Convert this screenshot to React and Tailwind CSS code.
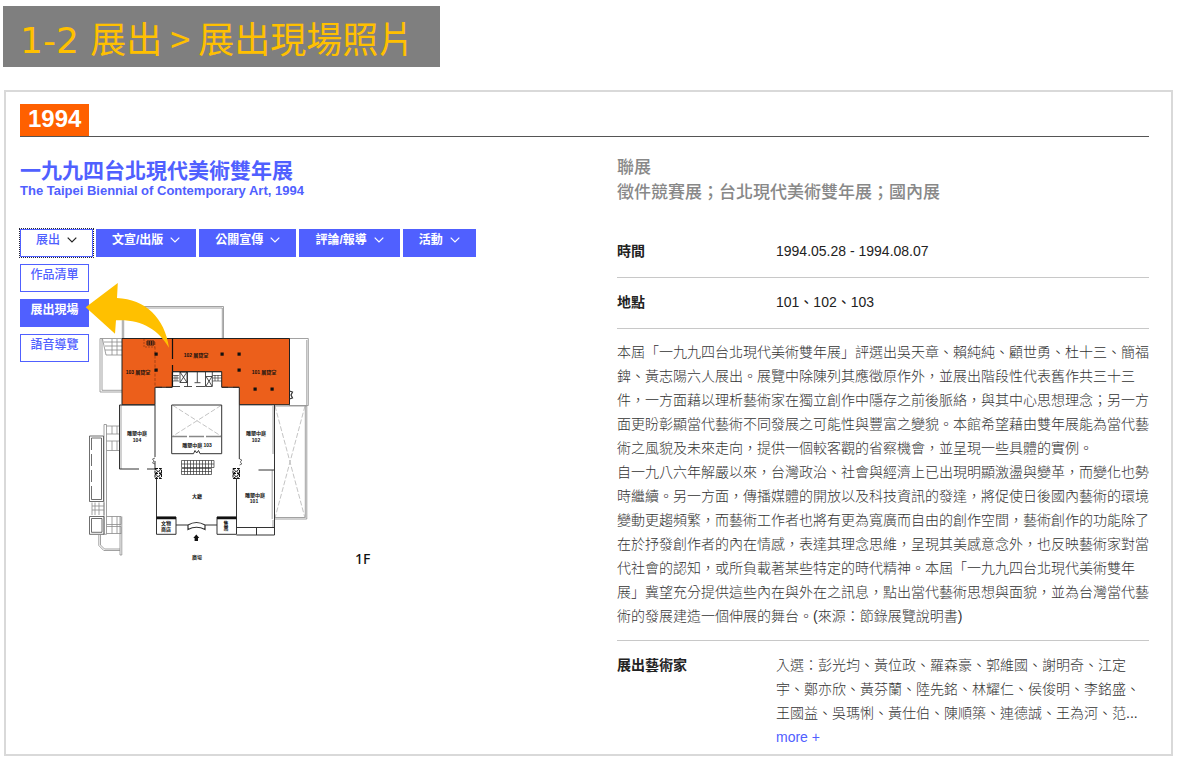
import clsx from "clsx";

const tabs = [
  { label: "展出", active: true },
  { label: "文宣/出版" },
  { label: "公關宣傳" },
  { label: "評論/報導" },
  { label: "活動" },
];

const subItems = [
  { label: "作品清單" },
  { label: "展出現場", active: true },
  { label: "語音導覽" },
];

const paragraphs = [
  "本屆「一九九四台北現代美術雙年展」評選出吳天章、賴純純、顧世勇、杜十三、簡福錍、黃志陽六人展出。展覽中除陳列其應徵原作外，並展出階段性代表舊作共三十三件，一方面藉以理析藝術家在獨立創作中隱存之前後脈絡，與其中心思想理念；另一方面更盼彰顯當代藝術不同發展之可能性與豐富之變貌。本館希望藉由雙年展能為當代藝術之風貌及未來走向，提供一個較客觀的省察機會，並呈現一些具體的實例。",
  "自一九八六年解嚴以來，台灣政治、社會與經濟上已出現明顯激盪與變革，而變化也勢時繼續。另一方面，傳播媒體的開放以及科技資訊的發達，將促使日後國內藝術的環境變動更趨頻繁，而藝術工作者也將有更為寬廣而自由的創作空間，藝術創作的功能除了在於抒發創作者的內在情感，表達其理念思維，呈現其美感意念外，也反映藝術家對當代社會的認知，或所負載著某些特定的時代精神。本屆「一九九四台北現代美術雙年展」冀望充分提供這些內在與外在之訊息，點出當代藝術思想與面貌，並為台灣當代藝術的發展建造一個伸展的舞台。(來源：節錄展覽說明書)",
];

const artists =
  "入選：彭光均、黃位政、羅森豪、郭維國、謝明奇、江定宇、鄭亦欣、黃芬蘭、陸先銘、林耀仁、侯俊明、李銘盛、王國益、吳瑪悧、黃仕伯、陳順築、連德誠、王為河、范...";

const pillars = [
  [156, 354],
  [156, 370],
  [222, 354],
  [239, 354],
  [239, 370],
  [255, 389],
  [272, 389],
];

const roomLabels = [
  [196, 357, "102 展覽室"],
  [138, 374, "103 展覽室"],
  [264, 374, "101 展覽室"],
  [137, 435, "雕塑中庭"],
  [137, 442, "104"],
  [256, 435, "雕塑中庭"],
  [256, 442, "102"],
  [255, 497, "雕塑中庭"],
  [254, 503, "101"],
  [197, 447, "雕塑中庭 103"],
  [197, 498, "大廳"],
  [166, 525, "文物"],
  [166, 531, "商店"],
  [226, 525, "售"],
  [226, 530, "票"],
  [197, 559, "廣場"],
];

function Chevron() {
  return (
    <svg width="10" height="6" viewBox="0 0 10 6" fill="none" stroke="currentColor" aria-hidden="true">
      <path d="M.7.7 5 5 9.3.7" strokeWidth="1.2" />
    </svg>
  );
}

function FloorPlan() {
  return (
    <svg viewBox="89 264 291 311" className="h-[311px] w-[291px]" role="img" aria-label="1F">
      {/* terraces and outer walls */}
      <g fill="none" stroke="#8a8a8a" strokeWidth=".8">
        <path d="M122.3 338V306.5H223.5V338M123.7 338V308H222.3V338" />
        <path d="M122 338.5H100V392H122M102 338.5V390.3H122M102.500 339 106 355H122M104 342H122M105 346H122M105 350H122M112 339V355M117 339V355" />
        <path d="M289 338.5H308.300V405.500H289M306.800 340V405" />
        <path d="M275 406H306.800V519H275M305.300 406V517.500H275" />
        <path d="M273 406V454M272.200 470V519M273 520V527" />
        <path d="M121 405V469M119.500 405V469" />
        <path d="M104 424.500V534.300H106.500V424.500ZM106.500 426H119.500M106.500 434H119.500M106.500 441H119.500M106.500 450.500H119.500M112 426V434M117 426V434M112 441V450.500M117 441V450.500" />
        <path d="M106.500 516.500H121V524.500H106.500M106.500 526.500H121V534M106.500 533.500H121M112 516.500V533.500M117 516.500V533.500M120 516.500V555H121.800V516.500" />
        <path d="M92 502.500V515M95 502.500V515M99 502.500V515M104 502.500V515M92 506H104M92 510H104" />
        <path d="M98.800 535V545.500L103.800 550.500H120M100.500 535V545L104.500 549H120" />
      </g>
      <g fill="none" stroke="#aaa" strokeWidth=".7" strokeDasharray="5 2">
        <path d="M275 406 305 518M305 406 275 518" />
        <path d="M173 405.500 221 436M221 405.500 173 436" />
      </g>
      <g fill="none" stroke="#4a4a4a">
        <path d="M89.500 436H103.500V501.500H89.500ZM91.500 438H101.500V499.500H91.500M91.500 438V450M91.500 454V466M91.500 470V482M91.500 486V499.500" strokeWidth=".8" />
        <path d="M89.500 516.500H104V534.300H89.500ZM91.500 518.500H102V532.300H91.500Z" strokeWidth=".8" />
      </g>

      {/* exhibition rooms */}
      <path
        d="M122 338.500H289.500V404.700H239.300V387.300H221.700V371.700H172.300V387.300H155V404.700H122Z"
        fill="#ec5f1b"
        stroke="#222"
        strokeWidth="1"
      />
      <g fill="none" stroke="#111">
        <path d="M172.500 338V359M172.500 365V387" strokeWidth="1.200" />
        <path d="M155 342V387" stroke="#7d3410" strokeWidth=".6" strokeDasharray="3 1.500" />
        <path d="M144 339V347H155" stroke="#7d3410" strokeWidth=".6" strokeDasharray="2 1" />
        <path d="M147 341H154V345H147ZM149.300 341V345M151.600 341V345M147 343H154" strokeWidth=".8" />
      </g>
      {pillars.map(([x, y]) => (
        <rect key={`${x}-${y}`} x={x - 1.5} y={y - 1.5} width="3.2" height="3.2" fill="#111" />
      ))}

      {/* service core */}
      <g fill="none" stroke="#222" strokeWidth=".8">
        <path d="M172.300 371.700H221.700M180 372H187V382.500H180ZM180 372 187 382.500M187 372 180 382.500M187.500 372V386.500M197.300 372V382.500M194.500 382.700H200.500M205.500 372V386.500H212.300V372M206 376.500H212M206 376.500 212 386M212 376.500 206 386" />
        <path d="M172.300 375.500H179M172.300 378H179M172.300 381H179M175 375V381M177 375V381M212.500 375.500H221.700M212.500 378H221.700M212.500 381H221.700M215 375V381M218 375V381" strokeWidth=".6" />
        <path d="M172.300 386.500H180M184 386.500H192M196 386.500H205M156 387.300H162M166 387.300H172M222 387.300H228M233 387.300H239" />
      </g>

      {/* halls and courtyards */}
      <g fill="none" stroke="#333" strokeWidth="1">
        <path d="M155 404.700V457M155 461V469H147M139 469H119.500V405H155" />
        <path d="M171.700 405H221.700V453.700H200L198.500 450.500 196.700 453 195 450.500 193.500 453.700H171.700Z" />
        <path d="M172 436.500H221.500" stroke="#888" strokeWidth="1.500" strokeDasharray="15 2" />
        <path d="M239.300 404.700V459M239.300 404.700H274.500V535H236.500M258.500 470H274.500M236.500 527.500H274.500M256.500 527.500V535M236.500 478V517M156.500 478V517" />
        <path d="M155 458 152.500 459 154 461 152.500 463 155 464M239.500 459 241.800 460 240.300 462 241.800 464 239.500 465" strokeWidth=".7" />
        <path d="M289.500 391 292.500 392 291 395 292.500 398 289.500 399" strokeWidth="1.200" />
        <path d="M176 525H188M205 525H217M188 525Q196.500 520 205 525V529.500Q196.500 525 188 529.500Z" strokeWidth="1.200" />
        <path d="M156.500 517H176V534.300H156.500ZM217 517H236.500V534.300H217Z" />
      </g>
      <g fill="none" stroke="#111">
        <path d="M156.500 518H176M217 518H236.500" strokeWidth="2.500" />
        <path d="M155 468.500H161.500V478.500H155ZM155 473.500H161.500M155 469 161.500 473.500M161.500 469 155 473.500M155 474 161.500 478.500M161.500 474 155 478.500" strokeDasharray="3 1" />
        <path d="M233 468.500H239.500V478.500H233ZM233 473.500H239.500M233 469 239.500 473.500M239.500 469 233 473.500M233 474 239.500 478.500M239.500 474 233 478.500" strokeDasharray="3 1" />
      </g>
      <g fill="none" stroke="#333" strokeWidth=".7">
        <path d="M181.500 460.500H214V467.500H181.500ZM181.500 464H214M181.500 468.500H211.500V474.500H181.500ZM181.500 471.500H211.500" />
        <path d="M184.500 460.500V474.500M187.500 460.500V474.500M190.500 460.500V474.500M193.500 460.500V474.500M196.500 460.500V474.500M199.500 460.500V474.500M202.500 460.500V474.500M205.500 460.500V474.500M208.500 460.500V474.500M211.500 460.500V467.500" />
      </g>
      <path d="M196.300 534.500 199.300 538H198V541H194.600V538H193.300Z" fill="#111" />

      <g fill="#111" textAnchor="middle" className="text-[5px] font-bold">
        {roomLabels.map(([x, y, text]) => (
          <text key={`${x}-${y}`} x={x} y={y}>
            {text}
          </text>
        ))}
      </g>
      <text x="355" y="564" fill="#111" className="font-['Noto_Sans'] text-[14px] font-medium">
        1F
      </text>
    </svg>
  );
}

function Pointer() {
  return (
    <svg
      viewBox="85 282 86 68"
      className="absolute top-[18px] left-[65px] h-[68px] w-[86px]"
      fill="#ffc000"
      aria-hidden="true"
    >
      <path d="M85.700 307.300 117.800 283 117 298C145 299 165 318 169 347.700C158 329 141 319 116 320.300L115 333.700Z" />
    </svg>
  );
}

function InfoRow({ label, children }) {
  return (
    <div className="flex border-b border-[#c8c8c8] pt-3 pb-[14px] text-sm leading-6">
      <dt className="w-[159px] shrink-0 font-bold text-[#222]">{label}</dt>
      <dd className="text-[#222]">{children}</dd>
    </div>
  );
}

export default function App() {
  return (
    <main className="bg-white font-['Liberation_Sans','Noto_Sans_CJK_TC',sans-serif]" lang="zh-Hant">
      <div className="px-[3px] pt-[6px]">
        <h1 className="h-[61px] w-[437px] bg-[#7f7f7f] pl-[17px] font-['DejaVu_Sans','Noto_Sans_CJK_TC',sans-serif] text-[36px] leading-[62px] whitespace-nowrap text-[#ffc000]">
          1-2 展出<span className="font-['Noto_Sans_CJK_TC']"> &gt; </span>展出現場照片
        </h1>
      </div>

      <section className="mx-1 mt-[23px] border-2 border-[#d9d9d9] pt-3 pr-[22px] pb-[5px] pl-[14px]">
        <div className="flex border-b border-[#555]">
          <span className="bg-[#ff6000] px-2 pb-0.5 text-2xl leading-[30px] font-bold text-white">1994</span>
        </div>

        <div className="grid grid-cols-[1fr_532px]">
          <div className="pt-[23px]">
            <h2 className="text-[21px] leading-[22px] font-bold text-[#5060ff]">一九九四台北現代美術雙年展</h2>
            <p className="text-[13px] leading-[18px] font-bold text-[#5060ff]">
              The Taipei Biennial of Contemporary Art, 1994
            </p>

            <nav className="mt-[29px] flex gap-[3px]">
              {tabs.map((tab) => (
                <button
                  key={tab.label}
                  type="button"
                  className={clsx(
                    "flex h-7 items-center gap-[7px] px-4 pb-1.5 text-xs",
                    tab.active
                      ? "bg-white font-medium text-[#5060ff] outline-1 outline-[#223] outline-dotted ring-1 ring-[#5060ff] ring-inset"
                      : "bg-[#5060ff] font-bold text-white"
                  )}
                >
                  {tab.label}
                  <span className={tab.active ? "text-[#222]" : "text-white"}>
                    <Chevron />
                  </span>
                </button>
              ))}
            </nav>

            <div className="relative mt-[7px] flex">
              <div className="flex w-[69px] flex-col gap-[7px]">
                {subItems.map((item) => (
                  <button
                    key={item.label}
                    type="button"
                    className={clsx(
                      "h-7 border border-[#5060ff] pb-1.5 text-xs",
                      item.active ? "bg-[#5060ff] font-bold text-white" : "bg-white font-medium text-[#5060ff]"
                    )}
                  >
                    {item.label}
                  </button>
                ))}
              </div>
              <FloorPlan />
              <Pointer />
            </div>
          </div>

          <div className="pt-[18px]">
            <p className="text-[17px] leading-[25px] font-medium text-[#888]">
              聯展
              <br />
              徵件競賽展；台北現代美術雙年展；國內展
            </p>

            <dl className="mt-[22px]">
              <InfoRow label="時間">1994.05.28 - 1994.08.07</InfoRow>
              <InfoRow label="地點">101、102、103</InfoRow>
            </dl>

            <div className="border-b border-[#c8c8c8] pt-[11px] pb-3 text-sm leading-6 font-light text-[#333]">
              {paragraphs.map((text) => (
                <p key={text.slice(0, 6)}>{text}</p>
              ))}
            </div>

            <div className="flex pt-3 text-sm leading-6">
              <h3 className="w-[159px] shrink-0 font-bold text-[#222]">展出藝術家</h3>
              <div className="font-light text-[#333]">
                <p>{artists}</p>
                <a href="#more" className="font-normal text-[#5060ff]">
                  more +
                </a>
              </div>
            </div>
          </div>
        </div>
      </section>
    </main>
  );
}
